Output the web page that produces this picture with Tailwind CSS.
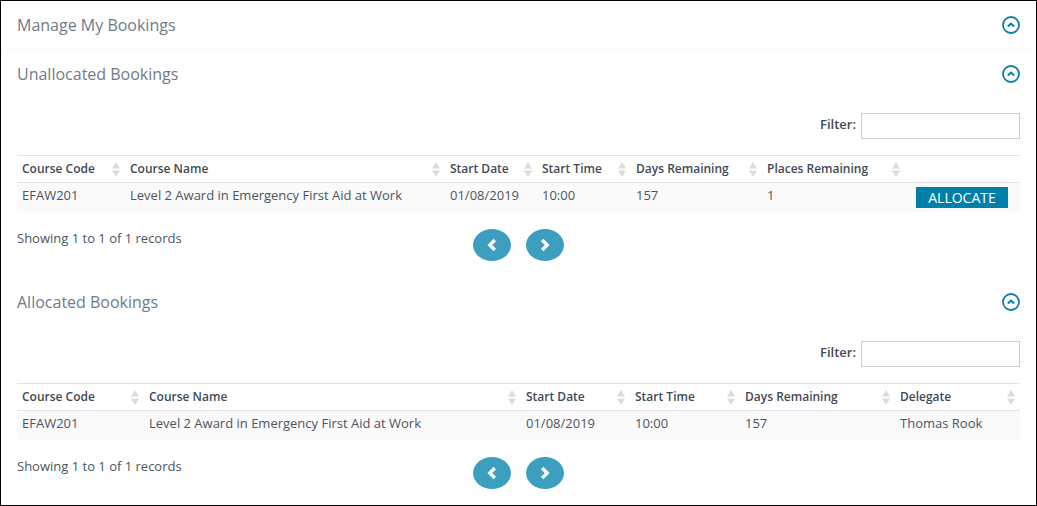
<!DOCTYPE html>
<html lang="en">
<head>
    <meta charset="UTF-8">
    <title>Manage My Bookings</title>
    <script src="https://cdn.jsdelivr.net/npm/@tailwindcss/browser@4"></script>
</head>
<body class="bg-white">
    <div class="w-[1037px] h-[506px] overflow-hidden border border-black font-['Open_Sans',sans-serif] text-[13px] text-[#4a5560]">
        <!-- Manage My Bookings -->
        <div class="h-[49px] flex items-center justify-between pl-[16px] pr-[16px] border-b border-[#fafafa]">
            <h2 class="text-[16px] text-[#6f7b88]">Manage My Bookings</h2>
            <svg class="w-[18px] h-[18px]" viewBox="0 0 18 18" fill="none" stroke="#0b7fa8"><circle cx="9" cy="9" r="8" stroke-width="1.8"/><path d="M5.8 10.600 9 7.600l3.200 3" stroke-width="2"/></svg>
        </div>

        <!-- Unallocated Bookings -->
        <section class="h-[228px] px-[16px]">
            <div class="h-[48px] flex items-center justify-between">
                <h2 class="text-[16px] text-[#6f7b88]">Unallocated Bookings</h2>
                <svg class="w-[18px] h-[18px]" viewBox="0 0 18 18" fill="none" stroke="#0b7fa8"><circle cx="9" cy="9" r="8" stroke-width="1.8"/><path d="M5.8 10.600 9 7.600l3.200 3" stroke-width="2"/></svg>
            </div>
            <div class="mt-[15px] flex items-center justify-end gap-[5px]">
                <label class="font-semibold text-[#3f4a55] pb-[2px]">Filter:</label>
                <input type="text" class="w-[159px] h-[26px] border border-[#ccc] bg-white">
            </div>
            <table class="mt-[16px] w-[1003px] table-fixed border-collapse">
                <colgroup><col class="w-[108px]"><col class="w-[320px]"><col class="w-[92px]"><col class="w-[94px]"><col class="w-[131px]"><col class="w-[143px]"><col></colgroup>
                <thead>
                    <tr class="h-[27px] border-y border-[#e2e2e8] text-left text-[12px] text-[#3f4a55]">
                        <th class="pl-[5px] pr-[5px] font-semibold"><span class="flex items-center justify-between">Course Code<svg class="w-[8px] h-[15px]" viewBox="0 0 8 15" fill="#dcdcdc"><path d="M4 0l4 6.500H0zM4 15l4-6.500H0z"/></svg></span></th>
                        <th class="pl-[5px] pr-[5px] font-semibold"><span class="flex items-center justify-between">Course Name<svg class="w-[8px] h-[15px]" viewBox="0 0 8 15" fill="#dcdcdc"><path d="M4 0l4 6.500H0zM4 15l4-6.500H0z"/></svg></span></th>
                        <th class="pl-[5px] pr-[5px] font-semibold"><span class="flex items-center justify-between">Start Date<svg class="w-[8px] h-[15px]" viewBox="0 0 8 15" fill="#dcdcdc"><path d="M4 0l4 6.500H0zM4 15l4-6.500H0z"/></svg></span></th>
                        <th class="pl-[5px] pr-[5px] font-semibold"><span class="flex items-center justify-between">Start Time<svg class="w-[8px] h-[15px]" viewBox="0 0 8 15" fill="#dcdcdc"><path d="M4 0l4 6.500H0zM4 15l4-6.500H0z"/></svg></span></th>
                        <th class="pl-[5px] pr-[5px] font-semibold"><span class="flex items-center justify-between">Days Remaining<svg class="w-[8px] h-[15px]" viewBox="0 0 8 15" fill="#dcdcdc"><path d="M4 0l4 6.500H0zM4 15l4-6.500H0z"/></svg></span></th>
                        <th class="pl-[5px] pr-[5px] font-semibold"><span class="flex items-center justify-between">Places Remaining<svg class="w-[8px] h-[15px]" viewBox="0 0 8 15" fill="#dcdcdc"><path d="M4 0l4 6.500H0zM4 15l4-6.500H0z"/></svg></span></th>
                        <th></th>
                    </tr>
                </thead>
                <tbody>
                    <tr class="h-[29px] bg-[#fafafb]">
                        <td class="pl-[5px] align-top pt-[3px]">EFAW201</td>
                        <td class="pl-[5px] align-top pt-[3px]">Level 2 Award in Emergency First Aid at Work</td>
                        <td class="pl-[5px] align-top pt-[3px]">01/08/2019</td>
                        <td class="pl-[5px] align-top pt-[3px]">10:00</td>
                        <td class="pl-[5px] align-top pt-[3px]">157</td>
                        <td class="pl-[5px] align-top pt-[3px]">1</td>
                        <td class="pl-[11px] align-top pt-[4px]"><button class="w-[92px] h-[21px] bg-[#0080a9] text-white text-[14px] leading-[21px]">ALLOCATE</button></td>
                    </tr>
                </tbody>
            </table>
            <div class="relative h-[49px] pt-[17px]">
                <p>Showing 1 to 1 of 1 records</p>
                <div class="absolute left-[456px] top-[17px] flex gap-[15px]">
                    <button class="w-[38px] h-[32px] rounded-[50%] bg-[#3d9fc0] flex items-center justify-center"><svg class="w-[12px] h-[14px]" viewBox="0 0 12 14" fill="none" stroke="#fff" stroke-width="3.400"><path d="M8.800 2 3.800 7l5 5"/></svg></button>
                    <button class="w-[38px] h-[32px] rounded-[50%] bg-[#3d9fc0] flex items-center justify-center"><svg class="w-[12px] h-[14px]" viewBox="0 0 12 14" fill="none" stroke="#fff" stroke-width="3.400"><path d="M3.200 2l5 5-5 5"/></svg></button>
                </div>
            </div>
        </section>

        <!-- Allocated Bookings -->
        <section class="px-[16px]">
            <div class="h-[48px] flex items-center justify-between">
                <h2 class="text-[16px] text-[#6f7b88]">Allocated Bookings</h2>
                <svg class="w-[18px] h-[18px]" viewBox="0 0 18 18" fill="none" stroke="#0b7fa8"><circle cx="9" cy="9" r="8" stroke-width="1.8"/><path d="M5.8 10.600 9 7.600l3.200 3" stroke-width="2"/></svg>
            </div>
            <div class="mt-[15px] flex items-center justify-end gap-[5px]">
                <label class="font-semibold text-[#3f4a55] pb-[2px]">Filter:</label>
                <input type="text" class="w-[159px] h-[26px] border border-[#ccc] bg-white">
            </div>
            <table class="mt-[16px] w-[1003px] table-fixed border-collapse">
                <colgroup><col class="w-[127px]"><col class="w-[377px]"><col class="w-[109px]"><col class="w-[110px]"><col class="w-[155px]"><col></colgroup>
                <thead>
                    <tr class="h-[27px] border-y border-[#e2e2e8] text-left text-[12px] text-[#3f4a55]">
                        <th class="pl-[5px] pr-[5px] font-semibold"><span class="flex items-center justify-between">Course Code<svg class="w-[8px] h-[15px]" viewBox="0 0 8 15" fill="#dcdcdc"><path d="M4 0l4 6.500H0zM4 15l4-6.500H0z"/></svg></span></th>
                        <th class="pl-[5px] pr-[5px] font-semibold"><span class="flex items-center justify-between">Course Name<svg class="w-[8px] h-[15px]" viewBox="0 0 8 15" fill="#dcdcdc"><path d="M4 0l4 6.500H0zM4 15l4-6.500H0z"/></svg></span></th>
                        <th class="pl-[5px] pr-[5px] font-semibold"><span class="flex items-center justify-between">Start Date<svg class="w-[8px] h-[15px]" viewBox="0 0 8 15" fill="#dcdcdc"><path d="M4 0l4 6.500H0zM4 15l4-6.500H0z"/></svg></span></th>
                        <th class="pl-[5px] pr-[5px] font-semibold"><span class="flex items-center justify-between">Start Time<svg class="w-[8px] h-[15px]" viewBox="0 0 8 15" fill="#dcdcdc"><path d="M4 0l4 6.500H0zM4 15l4-6.500H0z"/></svg></span></th>
                        <th class="pl-[5px] pr-[5px] font-semibold"><span class="flex items-center justify-between">Days Remaining<svg class="w-[8px] h-[15px]" viewBox="0 0 8 15" fill="#dcdcdc"><path d="M4 0l4 6.500H0zM4 15l4-6.500H0z"/></svg></span></th>
                        <th class="pl-[5px] pr-[5px] font-semibold"><span class="flex items-center justify-between">Delegate<svg class="w-[8px] h-[15px]" viewBox="0 0 8 15" fill="#dcdcdc"><path d="M4 0l4 6.500H0zM4 15l4-6.500H0z"/></svg></span></th>
                    </tr>
                </thead>
                <tbody>
                    <tr class="h-[29px] bg-[#fafafb]">
                        <td class="pl-[5px] align-top pt-[3px]">EFAW201</td>
                        <td class="pl-[5px] align-top pt-[3px]">Level 2 Award in Emergency First Aid at Work</td>
                        <td class="pl-[5px] align-top pt-[3px]">01/08/2019</td>
                        <td class="pl-[5px] align-top pt-[3px]">10:00</td>
                        <td class="pl-[5px] align-top pt-[3px]">157</td>
                        <td class="pl-[5px] align-top pt-[3px]">Thomas Rook</td>
                    </tr>
                </tbody>
            </table>
            <div class="relative h-[49px] pt-[17px]">
                <p>Showing 1 to 1 of 1 records</p>
                <div class="absolute left-[456px] top-[17px] flex gap-[15px]">
                    <button class="w-[38px] h-[32px] rounded-[50%] bg-[#3d9fc0] flex items-center justify-center"><svg class="w-[12px] h-[14px]" viewBox="0 0 12 14" fill="none" stroke="#fff" stroke-width="3.400"><path d="M8.800 2 3.800 7l5 5"/></svg></button>
                    <button class="w-[38px] h-[32px] rounded-[50%] bg-[#3d9fc0] flex items-center justify-center"><svg class="w-[12px] h-[14px]" viewBox="0 0 12 14" fill="none" stroke="#fff" stroke-width="3.400"><path d="M3.200 2l5 5-5 5"/></svg></button>
                </div>
            </div>
        </section>
    </div>
</body>
</html>
